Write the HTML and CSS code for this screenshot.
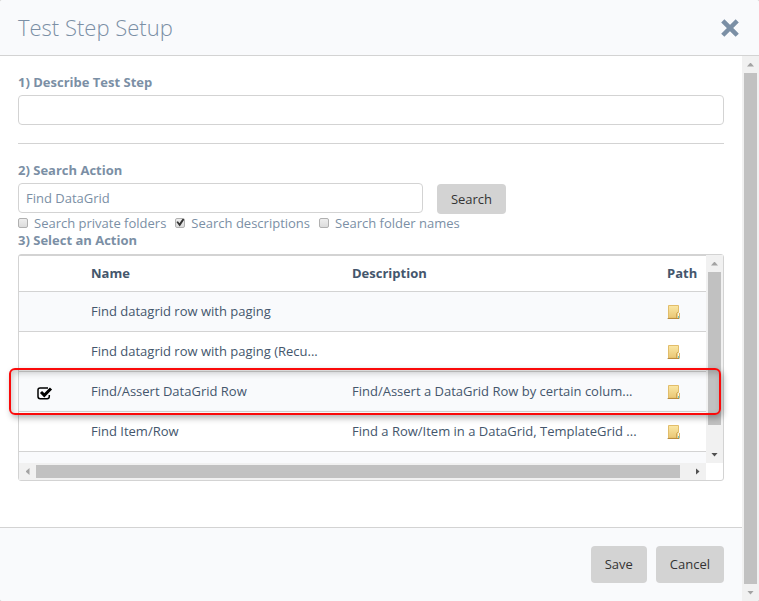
FILE: index.html
```html
<!DOCTYPE html>
<html lang="en">
<head>
<meta charset="utf-8">
<title>Test Step Setup</title>
<link rel="stylesheet" href="styles.css">
</head>
<body>
<svg class="defs" aria-hidden="true">
  <defs>
    <linearGradient id="gold" x1="0" y1="0" x2="0" y2="1">
      <stop offset="0" stop-color="#fbe7a4"/>
      <stop offset="1" stop-color="#e9c775"/>
    </linearGradient>
    <symbol id="folder" viewBox="0 0 14 15">
      <path d="M0 13h13v1H0z" fill="#b9b3a6" opacity=".6"/>
      <path d="M1.500.5h10v12.500h-10z" fill="url(#gold)" stroke="#e2bd6a"/>
      <path d="M1 13.500h11" stroke="#b98d3e"/>
      <path d="M9 13V8.500L10.500 7H12v6z" fill="#eed083"/>
      <path d="M9.500 13V8.500L11 7" fill="none" stroke="#cfa656"/>
      <path d="M11 8h1v3h-1z" fill="#fdf8e8"/>
      <path d="M11 11h1v2h-1z" fill="#6cc0c8"/>
      <path d="M12 8h1v5h-1z" fill="#dcb768"/>
    </symbol>
  </defs>
</svg>
<div class="dialog">
  <header class="dialog-header">
    <h1>Test Step Setup</h1>
    <button class="close" type="button" aria-label="Close">
      <svg viewBox="0 0 16 16"><path d="M3 3l10 10M13 3L3 13" stroke="currentColor" stroke-width="4" stroke-linecap="square" stroke-linejoin="round"/></svg>
    </button>
  </header>
  <div class="dialog-scroll">
    <div class="dialog-main">
      <main class="dialog-body">
        <label class="step" for="describe">1) Describe Test Step</label>
        <input class="field" id="describe" type="text">
        <hr>
        <label class="step" for="query">2) Search Action</label>
        <div class="search">
          <input class="field" id="query" type="text" value="Find DataGrid">
          <button class="btn" type="button">Search</button>
        </div>
        <div class="options">
          <label><input type="checkbox">Search private folders</label>
          <label><input type="checkbox" checked>Search descriptions</label>
          <label><input type="checkbox">Search folder names</label>
        </div>
        <h2 class="step">3) Select an Action</h2>
        <div class="grid">
          <div class="viewport">
            <table>
              <colgroup><col class="c-check"><col class="c-name"><col><col class="c-path"></colgroup>
              <thead>
                <tr><th></th><th>Name</th><th>Description</th><th>Path</th></tr>
              </thead>
              <tbody>
                <tr><td></td><td>Find datagrid row with paging</td><td></td><td class="path"><svg class="folder"><use href="#folder"/></svg></td></tr>
                <tr><td></td><td>Find datagrid row with paging (Recu...</td><td></td><td class="path"><svg class="folder"><use href="#folder"/></svg></td></tr>
                <tr>
                  <td class="pick"><svg class="tick" viewBox="0 0 16 14" role="img" aria-label="Selected"><path d="M11 1.900H3.200Q1 1.900 1 4v6.500Q1 12.700 3.200 12.700h7Q12.300 12.700 12.300 10.500V9" fill="none" stroke="#000" stroke-width="1.500"/><path d="M4 6l3.300 3.300L14 2.500" fill="none" stroke="#000" stroke-width="3"/></svg></td>
                  <td>Find/Assert DataGrid Row</td><td>Find/Assert a DataGrid Row by certain colum...</td><td class="path"><svg class="folder"><use href="#folder"/></svg></td>
                </tr>
                <tr><td></td><td>Find Item/Row</td><td>Find a Row/Item in a DataGrid, TemplateGrid ...</td><td class="path"><svg class="folder"><use href="#folder"/></svg></td></tr>
                <tr><td></td><td></td><td></td><td></td></tr>
              </tbody>
            </table>
          </div>
          <div class="bar vertical"><i class="arrow up"></i><i class="thumb list-thumb"></i><i class="arrow down active"></i></div>
          <div class="bar horizontal"><i class="arrow left"></i><i class="thumb row-thumb"></i><i class="arrow right active"></i></div>
          <div class="callout"></div>
        </div>
      </main>
      <footer class="dialog-footer">
        <button class="btn" type="button">Save</button>
        <button class="btn" type="button">Cancel</button>
      </footer>
    </div>
    <div class="bar vertical"><i class="arrow up"></i><i class="thumb page-thumb"></i><i class="arrow down"></i></div>
  </div>
</div>
</body>
</html>
```
FILE: styles.css
```css
* { box-sizing: border-box; }

body {
  margin: 0;
  background: #d8d8d8;
  color: #7b8fa5;
  font: 13px/18px "Open Sans", sans-serif;
}

input, button { font: inherit; color: inherit; }

.defs { position: absolute; width: 0; height: 0; }

.dialog {
  display: flex;
  flex-direction: column;
  min-height: 100vh;
  background: #fff;
  border-radius: 3px;
  overflow: hidden;
}

.dialog-header {
  display: flex;
  align-items: center;
  justify-content: space-between;
  padding: 0 20px 2px 18px;
  height: 56px;
  background: #f9fafc;
  border-bottom: 1px solid #d3d3d3;
}

h1 { margin: 0; font-size: 22px; font-weight: 300; line-height: 32px; }

.close { padding: 0; border: 0; background: none; width: 18px; height: 16px; }
.close svg { display: block; width: 18px; height: 18px; }

.dialog-scroll { flex: 1; display: flex; }
.dialog-main { flex: 1; min-width: 0; display: flex; flex-direction: column; }
.dialog-body { flex: 1; padding: 17px 18px 40px; }

.step { display: block; margin: 0 0 4px; font-size: 13px; font-weight: 700; line-height: 18px; }
h2.step { margin-bottom: 5px; }

.field {
  display: block;
  width: 100%;
  height: 30px;
  padding: 0 7px;
  border: 1px solid #d3d3d3;
  border-radius: 4px;
  background: #fff;
}

hr { margin: 18px 0 17px; border: 0; border-top: 1px solid #d3d3d3; }

.search { display: grid; grid-template-columns: 405fr 69px 204fr; column-gap: 14px; }
.search .btn { height: 30px; margin-top: 1px; padding: 0; }

.btn {
  height: 37px;
  padding: 0 14px 2px;
  border: 0;
  border-radius: 4px;
  background: #d3d3d3;
  color: #333;
}

.options { display: flex; gap: 9px; height: 17px; }
.options label { display: flex; align-items: center; gap: 6px; }
.options input {
  appearance: none;
  width: 10px;
  height: 10px;
  margin: 0;
  border: 1px solid #b0b0b0;
  border-radius: 2px;
  background: linear-gradient(#eee, #dcdcdc);
}
.options input:checked::before {
  content: "";
  display: block;
  width: 8px;
  height: 8px;
  background: #333;
  clip-path: polygon(0 45%, 20% 35%, 38% 58%, 80% 0, 100% 12%, 42% 100%);
}

.grid {
  position: relative;
  display: grid;
  grid-template-columns: 1fr 17px;
  grid-template-rows: 208px 17px;
  border: 1px solid #d3d3d3;
  border-radius: 3px;
}

.viewport { overflow: hidden; }

table { width: 100%; table-layout: fixed; border-collapse: separate; border-spacing: 0; color: #44566c; }
.c-check { width: 65px; }
.c-name { width: 261px; }
.c-path { width: 46px; }
th, td {
  height: 40px;
  padding: 0 7px 2px;
  border-bottom: 1px solid #d3d3d3;
  text-align: left;
  white-space: nowrap;
}
th { height: 37px; border-top: 1px solid #d3d3d3; font-weight: 700; }
th:last-child { padding-right: 0; }
tbody tr:nth-child(odd) { background: #f9fafc; }
.path { padding: 2px 0 0 7px; }
.pick { padding: 2px 0 0 18px; }
.tick { display: block; width: 16px; height: 14px; }
.folder { display: block; width: 14px; height: 15px; }

.bar { display: flex; align-items: center; background: #f1f1f1; }
.bar.vertical { width: 17px; flex-direction: column; }
.bar.horizontal { height: 17px; }
.thumb { background: #c1c1c1; }
.vertical .thumb { width: 13px; }
.horizontal .thumb { height: 13px; }
.page-thumb { flex: 1; }
.list-thumb { height: 153px; margin-bottom: auto; }
.row-thumb { width: calc(100% - 43px); margin-right: auto; }

.arrow { display: grid; place-items: center; flex: none; width: 17px; height: 17px; color: #a3a3a3; }
.arrow.active { color: #505050; }
.arrow::before { content: ""; width: 7px; height: 4px; background: currentColor; }
.up::before { clip-path: polygon(50% 0, 100% 100%, 0 100%); }
.down::before { clip-path: polygon(0 0, 100% 0, 50% 100%); }
.left::before, .right::before { width: 4px; height: 7px; }
.left::before { clip-path: polygon(100% 0, 100% 100%, 0 50%); }
.right::before { clip-path: polygon(0 0, 100% 50%, 0 100%); }

/* Highlight drawn over the selected row */
.callout {
  position: absolute;
  left: -10px;
  right: 2px;
  top: 113px;
  height: 47px;
  border: 2px solid #fa0a0a;
  border-radius: 6px;
  box-shadow: 2px 3px 6px rgba(0, 0, 0, .3), inset 2px 3px 6px rgba(0, 0, 0, .2);
  pointer-events: none;
}

.dialog-footer {
  display: flex;
  justify-content: flex-end;
  gap: 9px;
  padding: 18px;
  background: #f9fafc;
  border-top: 1px solid #d3d3d3;
}
```
